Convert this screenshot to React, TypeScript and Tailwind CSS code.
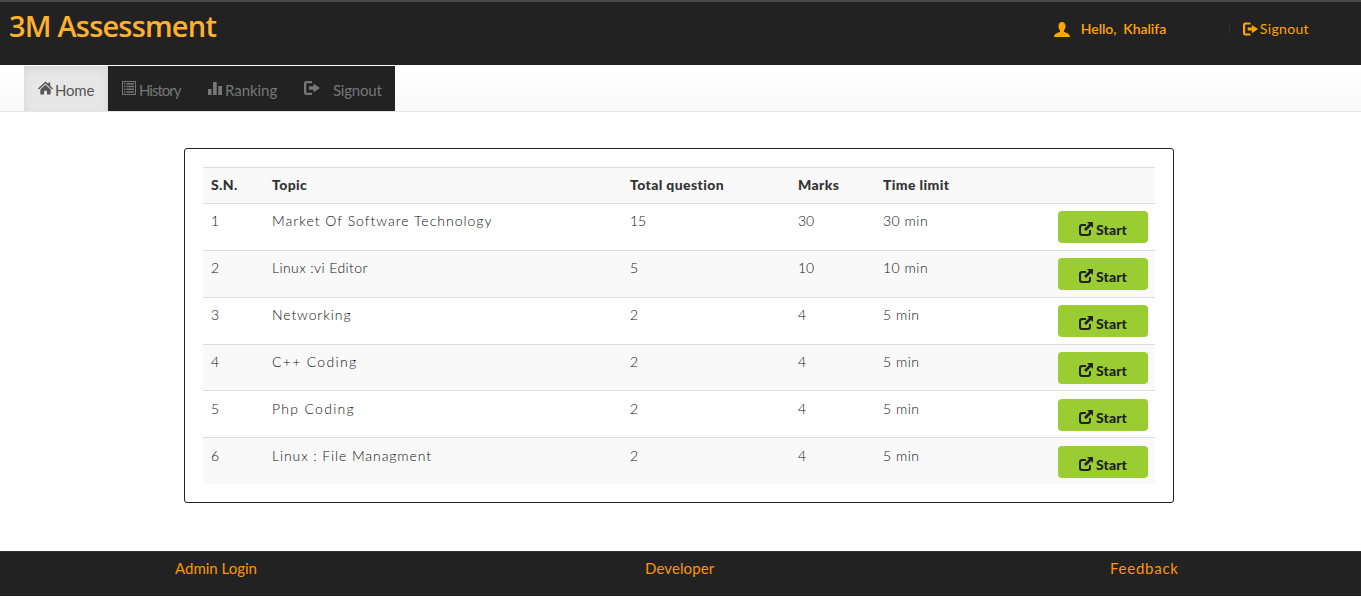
import React from "react";

const sans = "font-['Lato','Noto_Sans',sans-serif]";

function HomeIcon({ className }: { className?: string }) {
  return (
    <svg viewBox="0 0 16 14" className={className} fill="currentColor">
      <path d="M8 0 L11 2.8 V1 H13 V4.7 L16 7.5 L15 8.5 L8 2.2 L1 8.5 L0 7.5 Z" />
      <path d="M2.5 8.5 L8 3.6 L13.5 8.5 V14 H9.5 V10 H6.5 V14 H2.5 Z" />
    </svg>
  );
}

function HistoryIcon({ className }: { className?: string }) {
  return (
    <svg viewBox="0 0 14 14" className={className} fill="currentColor">
      <path fillRule="evenodd" d="M0 0 H14 V14 H0 Z M1 1 V13 H13 V1 Z" />
      <path d="M2 2 H3.5 V3.5 H2 Z M2 4.7 H3.5 V6.2 H2 Z M2 7.5 H3.5 V9 H2 Z M2 10.2 H3.5 V11.7 H2 Z M4.5 2 H12 V3.5 H4.5 Z M4.5 4.7 H12 V6.2 H4.5 Z M4.5 7.5 H12 V9 H4.5 Z M4.5 10.2 H12 V11.7 H4.5 Z" />
    </svg>
  );
}

function SignalIcon({ className }: { className?: string }) {
  return (
    <svg viewBox="0 0 14 14" className={className} fill="currentColor">
      <path d="M0 8 H3.5 V14 H0 Z M5 1 H8.7 V14 H5 Z M10.3 5 H14 V14 H10.3 Z" />
    </svg>
  );
}

function LogoutIcon({ className }: { className?: string }) {
  return (
    <svg viewBox="0 0 16 14" className={className} fill="currentColor">
      <path d="M2.5 0 H8 V2.2 H3.2 Q2.3 2.2 2.3 3.1 V10.9 Q2.3 11.8 3.2 11.8 H8 V14 H2.5 Q0 14 0 11.5 V2.5 Q0 0 2.5 0 Z" />
      <path d="M5 5.3 H9.5 V2.6 L16 7 L9.5 11.4 V8.7 H5 Z" />
    </svg>
  );
}

function UserIcon({ className }: { className?: string }) {
  return (
    <svg viewBox="0 0 16 15" className={className} fill="currentColor">
      <path d="M8 0 C10.4 0 11.5 1.8 11.5 4 C11.5 6 10.8 7.6 9.9 8.6 C9.7 9.6 10.3 10 11.5 10.5 C13.5 11.2 15.4 11.8 16 15 H0 C0.6 11.8 2.5 11.2 4.5 10.5 C5.7 10 6.3 9.6 6.1 8.6 C5.2 7.6 4.5 6 4.5 4 C4.5 1.8 5.6 0 8 0 Z" />
    </svg>
  );
}

function NewWindowIcon({ className }: { className?: string }) {
  return (
    <svg viewBox="0 0 14 14" className={className} fill="currentColor">
      <path d="M3 2 H7 V4 H3.5 Q2 4 2 5.5 V10.5 Q2 12 3.5 12 H8.5 Q10 12 10 10.5 V8 H12 V11 Q12 14 9 14 H3 Q0 14 0 11 V5 Q0 2 3 2 Z" />
      <path d="M8 0 H14 V6 L12 4 L7 9 L5 7 L10 2 Z" />
    </svg>
  );
}

const navItems = [
  { label: "History", Icon: HistoryIcon, iconClass: "w-[14px] h-[14px]", text: "ml-[3px] tracking-[-1px]", width: "w-[86px]" },
  { label: "Ranking", Icon: SignalIcon, iconClass: "w-[14px] h-[14px]", text: "ml-[3px] tracking-[-0.05px]", width: "w-[96px]" },
  { label: "Signout", Icon: LogoutIcon, iconClass: "w-[16px] h-[14px]", text: "ml-[13px] tracking-[-0.2px]", width: "w-[105px]" },
];

const rows = [
  { sn: "1", topic: "Market Of Software Technology", total: "15", marks: "30", time: "30 min", h: "h-[47px] border-b", pad: "pt-[7px]", track: "tracking-[1px]" },
  { sn: "2", topic: "Linux :vi Editor", total: "5", marks: "10", time: "10 min", h: "h-[47px] border-b", pad: "pt-[7px]", track: "tracking-[0.4px]" },
  { sn: "3", topic: "Networking", total: "2", marks: "4", time: "5 min", h: "h-[47px] border-b", pad: "pt-[7px]", track: "tracking-[0.9px]" },
  { sn: "4", topic: "C++ Coding", total: "2", marks: "4", time: "5 min", h: "h-[46px] border-b", pad: "pt-[7px]", track: "tracking-[1.3px]" },
  { sn: "5", topic: "Php Coding", total: "2", marks: "4", time: "5 min", h: "h-[47px] border-b", pad: "pt-[8px]", track: "tracking-[1.3px]" },
  { sn: "6", topic: "Linux : File Managment", total: "2", marks: "4", time: "5 min", h: "h-[46px]", pad: "pt-[8px]", track: "tracking-[0.9px]" },
];

const cols = "grid grid-cols-[61px_358px_168px_85px_1fr]";

export default function App() {
  return (
    <div className={`${sans} bg-white`}>
      <header className="h-[65px] bg-[#222222] border-t-2 border-[#4a4a4a] flex items-start justify-between">
        <h1 className="ml-[9px] mt-[6px] text-[29px] leading-[36px] font-semibold text-[#ffb02e] font-['Open_Sans',sans-serif] tracking-[-0.8px]">
          3M Assessment
        </h1>
        <div className="flex items-center mt-[18px] text-[14px] leading-[18px] text-[#ffa500]">
          <UserIcon className="w-[16px] h-[15px]" />
          <span className="ml-[11px] w-[148px] font-semibold tracking-[-0.05px] whitespace-pre">Hello,  Khalifa</span>
          <span className="w-px h-[12px] bg-[#2c3138]" />
          <LogoutIcon className="ml-[13px] w-[15px] h-[14px]" />
          <span className="ml-[2px] mr-[52px] tracking-[0.35px]">Signout</span>
        </div>
      </header>

      <nav className="mt-px h-[46px] bg-gradient-to-b from-white to-[#f8f8f8] border-b border-[#e7e7e7] pl-[24px] flex items-stretch">
        <a className="w-[84px] bg-[#e7e7e7] shadow-[inset_0_3px_9px_rgba(0,0,0,0.075)] flex items-center pl-[14px] pt-[3px] text-[#555555] text-[15px]">
          <HomeIcon className="w-[15px] h-[14px] mb-[4px]" />
          <span className="ml-[2px] tracking-[-0.2px]">Home</span>
        </a>
        <div className="flex bg-[#222222] text-[#777777] text-[15px]">
          {navItems.map(({ label, Icon, iconClass, text, width }) => (
            <a key={label} className={`${width} flex items-center pl-[14px] pt-[3px]`}>
              <Icon className={`${iconClass} mb-[4px]`} />
              <span className={text}>{label}</span>
            </a>
          ))}
        </div>
      </nav>

      <main className="pt-[36px] pb-[48px] pl-[184px]">
        <div className="w-[990px] h-[355px] border border-[#222222] rounded-[3px] pt-[18px] px-[18px]">
          <div className="w-[952px] text-[14px] text-[#333333]">
            <div className={`${cols} h-[37px] bg-[#f9f9f9] border-y border-[#dddddd] items-center pb-[2px] font-black tracking-[0.38px]`}>
              <span className="pl-[8px]">S.N.</span>
              <span className="pl-[8px]">Topic</span>
              <span className="pl-[8px]">Total question</span>
              <span className="pl-[8px]">Marks</span>
              <span className="pl-[8px]">Time limit</span>
            </div>
            {rows.map((r, i) => (
              <div
                key={r.sn}
                className={`${cols} ${r.h} border-[#dddddd] ${i % 2 === 1 ? "bg-[#f9f9f9]" : ""} font-light text-[#111111]`}
              >
                <span className={`pl-[8px] ${r.pad} leading-[20px]`}>{r.sn}</span>
                <span className={`pl-[8px] ${r.pad} leading-[20px] ${r.track}`}>{r.topic}</span>
                <span className={`pl-[8px] ${r.pad} leading-[20px]`}>{r.total}</span>
                <span className={`pl-[8px] ${r.pad} leading-[20px]`}>{r.marks}</span>
                <div className={`flex justify-between items-start ${r.pad} pl-[8px] pr-[7px]`}>
                  <span className="leading-[20px] tracking-[0.5px]">{r.time}</span>
                  <a className="w-[90px] h-[32px] rounded-[4px] bg-[#9acd32] flex items-center justify-center pt-[5px] text-[#222222] font-black tracking-[0.1px]">
                    <NewWindowIcon className="w-[14px] h-[14px] mb-[1px]" />
                    <span className="ml-[3px]">Start</span>
                  </a>
                </div>
              </div>
            ))}
          </div>
        </div>
      </main>

      <footer className="h-[45px] bg-[#222222] border-t border-[#333333] pt-[6px] pl-[175px] flex items-start leading-[20px] text-[15px] text-[#ff9500]">
        <a className="w-[81px] whitespace-nowrap">Admin Login</a>
        <a className="ml-[389px] w-[69px] tracking-[0.1px]">Developer</a>
        <a className="ml-[396px] tracking-[0.75px]">Feedback</a>
      </footer>
    </div>
  );
}
